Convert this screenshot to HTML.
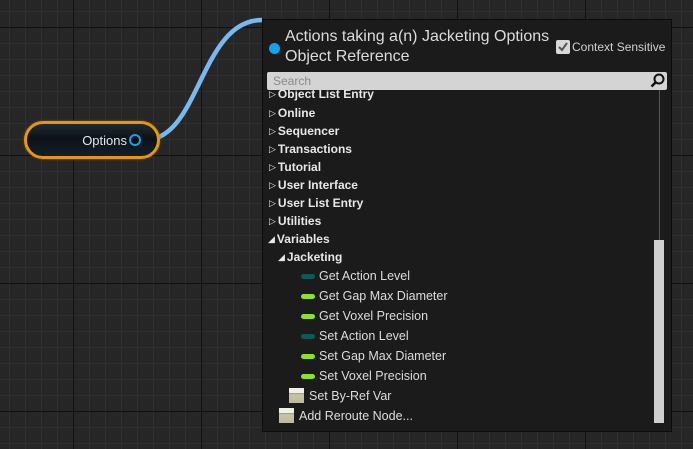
<!DOCTYPE html>
<html><head><meta charset="utf-8"><style>
*{margin:0;padding:0;box-sizing:border-box}
body{width:693px;height:449px;overflow:hidden;position:relative;font-family:"Liberation Sans","DejaVu Sans",sans-serif;
background-color:#262626;
background-image:
linear-gradient(#111 1px,transparent 1px),
linear-gradient(90deg,#111 1px,transparent 1px),
linear-gradient(#303030 1px,transparent 1px),
linear-gradient(90deg,#303030 1px,transparent 1px);
background-size:128px 128px,128px 128px,16px 16px,16px 16px;
background-position:0 27px,73px 0,0 11px,9px 0;}
.node{position:absolute;left:24px;top:121px;width:136px;height:38px;border-radius:19px;border:3px solid #e8950f;background:linear-gradient(#1e2a33,#0d1217 45%,#10202a);box-shadow:0 0 2px #8a5a00;}
.node .t{position:absolute;right:30px;top:9px;color:#e0e8ee;font-size:13px;}
.pin{position:absolute;left:129px;top:134px;width:12px;height:12px;border-radius:50%;border:2px solid #1aa0e8;background:#0a0f12}
.panel{position:absolute;left:262px;top:19px;width:410px;height:413px;background:#1b1b1b;border:1px solid #0c0c0c;overflow:hidden}
.dot{position:absolute;left:6px;top:23px;width:11px;height:11px;border-radius:50%;background:#0aa4f2}
.title{position:absolute;left:22px;top:7px;color:#dcdcdc;font-size:16px;line-height:20px}
.cs{position:absolute;left:292px;top:20px;color:#d0d0d0;font-size:12px;}
.cb{position:absolute;left:293px;top:20px;width:14px;height:14px;background:#d8d8d8;border-radius:2px}
.cs span{margin-left:17px}
.search{position:absolute;left:4px;top:52px;width:400px;height:18px;background:#d4d4d4;border-radius:2px;color:#8a8a8a;font-size:12px;padding:2px 6px;z-index:2}
.row{position:absolute;color:#e8e8e8;font-size:12px;font-weight:bold;white-space:nowrap}
.row i{font-style:normal;font-weight:normal;font-size:9px;margin-right:2px;vertical-align:1px}
.it{position:absolute;color:#dcdcdc;font-size:12.5px;white-space:nowrap}
.pill{position:absolute;left:38px;width:14px;height:5px;border-radius:3px}
.g{background:#8fe02a}.d{background:#0e5a5a}
.box{position:absolute;width:15px;height:15px;background:linear-gradient(#f0f0e8 35%,#999 35%,#c8c4a8 45%,#bfb99a)}
.sbl{position:absolute;left:396px;top:70px;width:1px;height:152px;background:#555}
.sb{position:absolute;left:391px;top:220px;width:10px;height:183px;background:#cfcfcf}
</style></head><body>
<svg style="position:absolute;left:0;top:0" width="693" height="449"><path d="M145 140 C 200 140, 200 20, 262 20" stroke="#7ab8f0" stroke-width="4.5" fill="none"/><rect x="144" y="137" width="12" height="6" fill="#6a9fc8"/></svg>
<div class="node"><div class="t">Options</div></div>
<div class="pin"></div>
<div class="panel">
<div class="dot"></div>
<div class="title">Actions taking a(n) Jacketing Options<br>Object Reference</div>
<div class="cb"><svg width="14" height="14"><path d="M3 7 L6 10 L11 3" stroke="#555" stroke-width="2" fill="none"/></svg></div>
<div class="cs"><span>Context Sensitive</span></div>
<div class="search">Search<svg style="position:absolute;right:2px;top:1px" width="15" height="15"><circle cx="9" cy="6" r="4.5" stroke="#111" stroke-width="2" fill="none"/><path d="M5.5 9.5 L1.5 13.5" stroke="#111" stroke-width="2.5"/></svg></div>
<div class="row" style="left:6px;top:67px"><i>▷</i>Object List Entry</div>
<div class="row" style="left:6px;top:86px"><i>▷</i>Online</div>
<div class="row" style="left:6px;top:104px"><i>▷</i>Sequencer</div>
<div class="row" style="left:6px;top:122px"><i>▷</i>Transactions</div>
<div class="row" style="left:6px;top:140px"><i>▷</i>Tutorial</div>
<div class="row" style="left:6px;top:158px"><i>▷</i>User Interface</div>
<div class="row" style="left:6px;top:176px"><i>▷</i>User List Entry</div>
<div class="row" style="left:6px;top:194px"><i>▷</i>Utilities</div>
<div class="row" style="left:5px;top:212px"><i>◢</i>Variables</div>
<div class="row" style="left:15px;top:230px"><i>◢</i>Jacketing</div>
<div class="pill d" style="top:254px"></div><div class="it" style="left:56px;top:249px">Get Action Level</div>
<div class="pill g" style="top:274px"></div><div class="it" style="left:56px;top:269px">Get Gap Max Diameter</div>
<div class="pill g" style="top:294px"></div><div class="it" style="left:56px;top:289px">Get Voxel Precision</div>
<div class="pill d" style="top:314px"></div><div class="it" style="left:56px;top:309px">Set Action Level</div>
<div class="pill g" style="top:334px"></div><div class="it" style="left:56px;top:329px">Set Gap Max Diameter</div>
<div class="pill g" style="top:354px"></div><div class="it" style="left:56px;top:349px">Set Voxel Precision</div>
<div class="box" style="left:26px;top:368px"></div><div class="it" style="left:46px;top:369px">Set By-Ref Var</div>
<div class="box" style="left:16px;top:388px"></div><div class="it" style="left:36px;top:389px">Add Reroute Node...</div>
<div class="sbl"></div><div class="sb"></div>
</div>
</body></html>
